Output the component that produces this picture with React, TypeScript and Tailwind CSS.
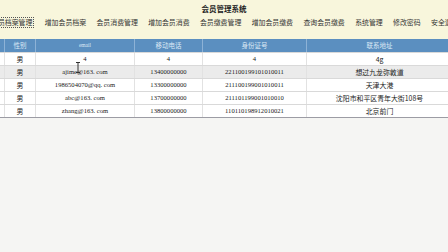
import React from "react";

const cjk = { fontFamily: '"Noto Sans CJK SC", "Noto Sans", sans-serif' };
const serif = { fontFamily: '"Liberation Serif", "Noto Sans CJK SC", serif' };

const nav = [
  "会员档案管理",
  "增加会员档案",
  "会员消费管理",
  "增加会员消费",
  "会员缴费管理",
  "增加会员缴费",
  "查询会员缴费",
  "系统管理",
  "修改密码",
  "安全退出",
];

const rows = [
  ["男", "4", "4", "4", "4g"],
  ["男", "ajime@163. com", "13400000000", "221100199101010011", "想过九龙弥敦道"],
  ["男", "1986504070@qq. com", "13300000000", "211100199001010011", "天津大港"],
  ["男", "abc@163. com", "13700000000", "211101199001010010", "沈阳市和平区青年大街108号"],
  ["男", "zhang@163. com", "13800000000", "110110198912010021", "北京前门"],
];

const widths = ["w-[5px]", "w-[31px]", "w-[99px]", "w-[68px]", "w-[104px]", "w-[146px]"];

export default function App() {
  return (
    <div className="relative w-[448px] h-[252px] overflow-hidden bg-[#f5f5f3]" style={cjk}>
      <div className="h-[39px] bg-[#f8f6dc] flex flex-col">
        <div className="pt-[4px] text-center text-[7.5px] leading-[9px] font-bold text-[#222]">会员管理系统</div>
        <div className="mt-[4px] flex ml-[-10px] gap-[10.4px] text-[6.9px] leading-[11px] text-[#333] whitespace-nowrap">
          {nav.map((n, i) => (
            <span
              key={n}
              className={i === 0 ? "border border-dotted border-[#555] h-[11px] leading-[9px] pr-[1px]" : "h-[11px]"}
            >
              {n}
            </span>
          ))}
        </div>
      </div>
      <div className="w-[453px] border-b border-[#9c9ca4]">
        <div className="flex h-[13px] bg-[#5b8fc0] text-[#dce9f5] text-[6.5px] leading-[13px]">
          {["", "性别", "email", "移动电话", "身份证号", "联系地址"].map((h, i) => (
            <div
              key={i}
              className={`${widths[i]} shrink-0 text-center border-r border-[#8db2d6] ${i === 2 ? "text-[5.5px]" : ""}`}
              style={i === 2 ? serif : undefined}
            >
              {h}
            </div>
          ))}
        </div>
        {rows.map((r, ri) => (
          <div
            key={ri}
            className={`flex h-[13px] border-t border-[#d9d9d9] text-[#222] leading-[12px] ${ri === 1 ? "bg-[#ebebeb]" : "bg-white"}`}
          >
            {["", ...r].map((c, ci) => (
              <div
                key={ci}
                className={`${widths[ci]} shrink-0 text-center border-r border-[#e2e2e2] whitespace-nowrap ${
                  ci === 1 || ci === 5 ? "text-[6.9px]" : "text-[6.6px]"
                }`}
                style={ci === 1 || ci === 5 ? cjk : serif}
              >
                {c}
              </div>
            ))}
          </div>
        ))}
      </div>
      <svg className="absolute left-[75px] top-[62px]" width="6" height="11" viewBox="0 0 6 11">
        <path d="M1 0.5h4M3 0.5v10M1 10.5h4" stroke="#333" strokeWidth="1" fill="none" />
      </svg>
    </div>
  );
}
